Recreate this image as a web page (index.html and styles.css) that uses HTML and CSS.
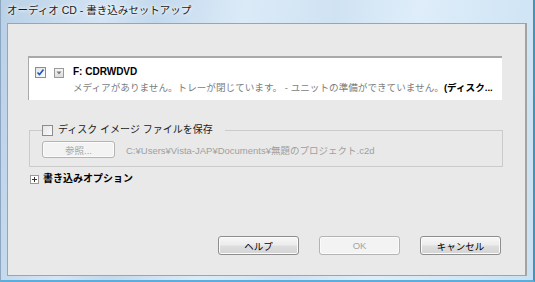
FILE: index.html
```html
<!DOCTYPE html>
<html lang="ja">
<head>
    <meta charset="UTF-8">
    <title>オーディオ CD - 書き込みセットアップ</title>
    <link rel="stylesheet" href="styles.css">
</head>
<body>
    <div class="window">
        <div class="titlebar">オーディオ CD - 書き込みセットアップ</div>

        <div class="client">
            <!-- Drive list -->
            <div class="drive-list">
                <div class="drive">
                    <span class="check">
                        <svg width="9" height="9" viewBox="0 0 9 9"><path d="M1.5 4.5 L3.5 6.5 L7.5 1.5" fill="none" stroke="#1d53c0" stroke-width="1.6"/></svg>
                    </span>
                    <span class="expander">
                        <svg width="8" height="8" viewBox="0 0 8 8"><path d="M1.5 2.5 L6.5 2.5 L4 5.5 Z" fill="#7a7a7a"/></svg>
                    </span>
                    <div class="drive-info">
                        <div class="drive-name">F: CDRWDVD</div>
                        <div class="drive-status">メディアがありません。トレーが閉じています。 - ユニットの準備ができていません。<b>(ディスク...</b></div>
                    </div>
                </div>
            </div>

            <!-- Disc image -->
            <fieldset class="image-group">
                <legend><span class="check"></span>ディスク イメージ ファイルを保存</legend>
                <div class="image-row">
                    <button class="btn browse-btn" disabled>参照...</button>
                    <span class="path">C:¥Users¥Vista-JAP¥Documents¥無題のプロジェクト.c2d</span>
                </div>
            </fieldset>

            <div class="options">
                <span class="plus">
                    <svg width="7" height="7" viewBox="0 0 7 7"><path d="M1 3.5 H6 M3.5 1 V6" stroke="#333" stroke-width="1"/></svg>
                </span>
                書き込みオプション
            </div>

            <div class="buttons">
                <button class="btn">ヘルプ</button>
                <button class="btn" disabled>OK</button>
                <button class="btn">キャンセル</button>
            </div>
        </div>
    </div>
</body>
</html>
```

FILE: styles.css
```css
* {
    box-sizing: border-box;
}
body {
    margin: 0;
    font-family: "Liberation Sans", "Noto Sans CJK JP", sans-serif;
    font-size: 9.5px;
    color: #000;
    background-color: #cfe2f3;
}
.window {
    width: 535px;
    height: 282px;
    display: flex;
    flex-direction: column;
    border-left: 1px solid #8da7c0;
    border-right: 2px solid #3f95ba;
    border-bottom: 2px solid #5aaedb;
    background: linear-gradient(100deg, #b9d0e6 0%, #d3e4f4 18%, #c4d9ed 27%, #dbeaf7 42%, #d0e3f3 58%, #deedf9 72%, #d4e7f6 86%, #c9e1f3 100%);
}
.titlebar {
    height: 23px;
    line-height: 20px;
    padding-left: 6px;
    font-size: 10.5px;
    color: #1b1b1b;
    text-shadow: 0 0 5px #fff, 0 0 3px #fff;
}
.client {
    flex: 1;
    margin: 0 6px 4px 6px;
    display: flex;
    flex-direction: column;
    padding: 32px 23px 20px 20px;
    background-color: #e9e9e9;
    border: 1px solid #a3a3a3;
    border-right-width: 2px;
}
.drive-list {
    height: 44px;
    overflow: hidden;
    background-color: #fff;
    border-top: 2px solid #a9a9a9;
    border-left: 1px solid #a9a9a9;
}
.drive {
    display: flex;
    align-items: flex-start;
    padding: 9px 0 0 6px;
}
.check {
    width: 11px;
    height: 11px;
    flex: none;
    display: inline-flex;
    align-items: center;
    justify-content: center;
    border: 1px solid #8c8c8c;
    background: linear-gradient(135deg, #e4e4e4, #fbfbfb);
}
.expander {
    width: 10px;
    height: 10px;
    flex: none;
    margin: 1px 0 0 8px;
    display: inline-flex;
    align-items: center;
    justify-content: center;
    border: 1px solid #999;
    background: linear-gradient(#f6f6f6, #dcdcdc);
}
.drive-info {
    margin-left: 9px;
    margin-top: -1px;
    white-space: nowrap;
}
.drive-name {
    font-weight: bold;
    line-height: 12px;
    font-size: 10px;
}
.drive-status {
    margin-top: 4px;
    line-height: 12px;
    font-size: 9.6px;
    color: #7d7d7d;
}
.drive-status b {
    color: #000;
}
.image-group {
    margin: 24px -1px 0 1px;
    padding: 5px 12px 8px 12px;
    border: 1px solid #cbcbcb;
}
.image-group legend {
    display: flex;
    align-items: center;
    gap: 5px;
    padding: 0 12px 0 0;
    line-height: 12px;
    font-size: 10px;
    color: #222;
}
.image-row {
    display: flex;
    align-items: center;
}
.btn {
    font-family: inherit;
    font-size: 9.5px;
    color: #000;
    height: 19px;
    width: 81px;
    padding: 0;
    border: 1px solid #8e8e8e;
    border-radius: 3px;
    background: linear-gradient(#f7f7f7 0%, #ececec 48%, #dedede 52%, #d4d4d4 100%);
    box-shadow: inset 0 0 0 1px #fbfbfb;
}
.btn:disabled {
    color: #a4a4a4;
    border-color: #b4b4b4;
    background: #f3f3f3;
}
.browse-btn {
    width: 73px;
    height: 17px;
}
.path {
    margin-left: 11px;
    color: #9f9f9f;
}
.options {
    display: flex;
    align-items: center;
    gap: 4px;
    margin: 6px 0 0 2px;
    line-height: 12px;
    font-size: 10px;
    font-weight: bold;
}
.plus {
    width: 9px;
    height: 9px;
    display: inline-flex;
    align-items: center;
    justify-content: center;
    border: 1px solid #9a9a9a;
    background-color: #fff;
}
.buttons {
    margin-top: auto;
    display: flex;
    justify-content: flex-end;
    gap: 20px;
    padding-right: 1px;
}
```
